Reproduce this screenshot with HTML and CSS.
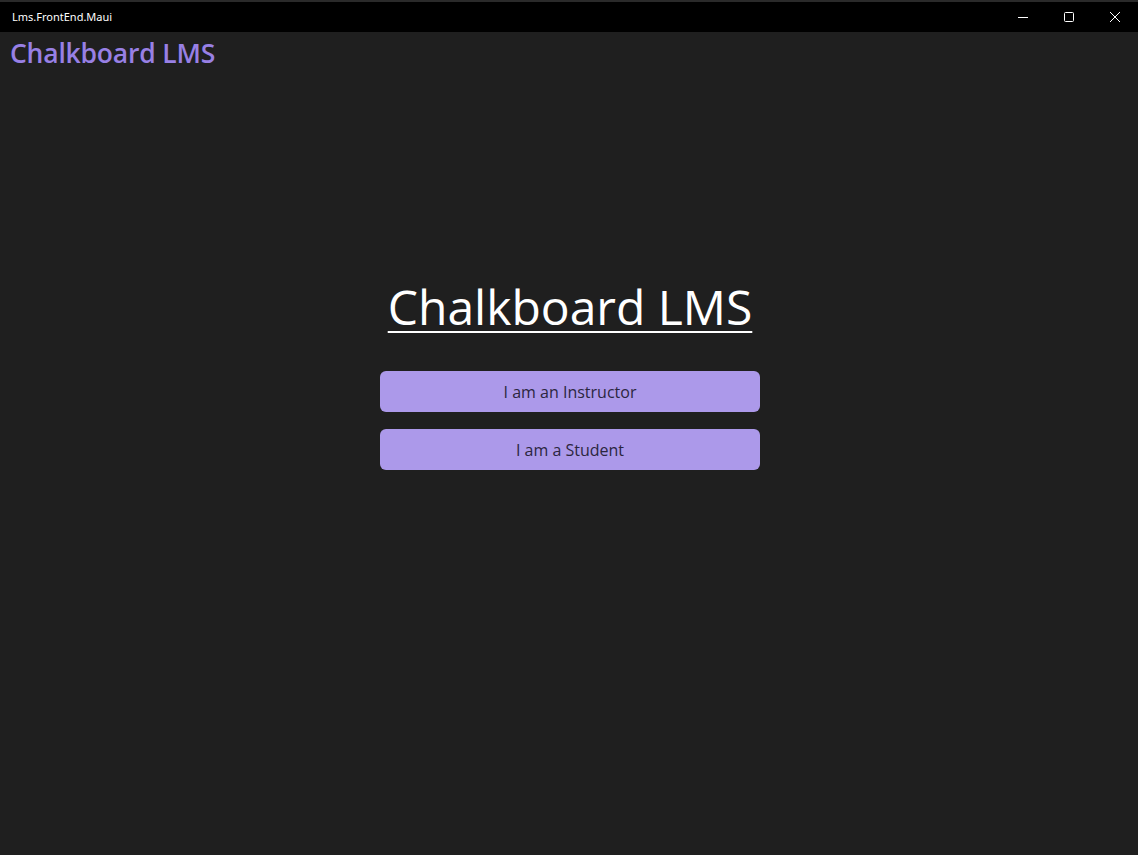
FILE: index.html
```html
<!DOCTYPE html>
<html lang="en">
<head>
<meta charset="utf-8">
<title>Lms.FrontEnd.Maui</title>
<link rel="stylesheet" href="styles.css">
</head>
<body>
<div class="window">
  <div class="titlebar">
    <span class="app-title">Lms.FrontEnd.Maui</span>
    <div class="caption-buttons">
      <span class="cap-btn" aria-label="Minimize">
        <svg width="10" height="10" viewBox="0 0 10 10"><path d="M0 5.5H10" stroke="#fff" stroke-width="1"/></svg>
      </span>
      <span class="cap-btn" aria-label="Maximize">
        <svg width="10" height="10" viewBox="0 0 10 10"><rect x="0.5" y="0.5" width="9" height="9" rx="1" fill="none" stroke="#fff" stroke-width="1"/></svg>
      </span>
      <span class="cap-btn" aria-label="Close">
        <svg width="10" height="10" viewBox="0 0 10 10"><path d="M0 0L10 10M10 0L0 10" stroke="#fff" stroke-width="1"/></svg>
      </span>
    </div>
  </div>
  <div class="content">
    <header class="nav-title">Chalkboard LMS</header>
    <main class="center">
      <h1 class="hero">Chalkboard LMS</h1>
      <div class="actions">
        <button class="role-btn">I am an Instructor</button>
        <button class="role-btn">I am a Student</button>
      </div>
    </main>
  </div>
</div>
</body>
</html>
```

FILE: styles.css
```css
html, body {
  margin: 0;
  padding: 0;
  height: 100%;
  background: #1f1f1f;
}
.window {
  display: flex;
  flex-direction: column;
  height: 855px;
  border-top: 2px solid #2a2a2a;
  box-sizing: border-box;
}
.titlebar {
  height: 30px;
  background: #000;
  display: flex;
  align-items: center;
  justify-content: space-between;
  flex: none;
}
.app-title {
  color: #fff;
  font-family: "Noto Sans", "Open Sans", sans-serif;
  font-size: 11px;
  padding-left: 12px;
  padding-bottom: 1px;
}
.caption-buttons {
  display: flex;
  height: 100%;
}
.cap-btn {
  width: 46px;
  height: 100%;
  display: flex;
  align-items: center;
  justify-content: center;
}
.content {
  flex: 1;
  display: flex;
  flex-direction: column;
  background: #1f1f1f;
}
.nav-title {
  color: #9880e5;
  font-family: "Open Sans", sans-serif;
  font-weight: 600;
  font-size: 26.5px;
  letter-spacing: -0.2px;
  padding: 2px 0 0 10px;
  line-height: 38px;
}
.center {
  display: flex;
  flex-direction: column;
  align-items: center;
  padding-top: 203px;
  padding-left: 2px;
}
.hero {
  margin: 0;
  color: #fff;
  font-family: "Open Sans", sans-serif;
  font-weight: 400;
  font-size: 48px;
  line-height: 64px;
  text-decoration: underline;
  text-decoration-thickness: 2px;
  text-underline-offset: 6px;
}
.actions {
  display: flex;
  flex-direction: column;
  gap: 17px;
  margin-top: 32px;
}
.role-btn {
  width: 380px;
  height: 41px;
  border: none;
  border-radius: 6px;
  background: #ac99ea;
  color: #2b2640;
  font-family: "Open Sans", sans-serif;
  font-size: 16px;
  padding: 0;
}
```
